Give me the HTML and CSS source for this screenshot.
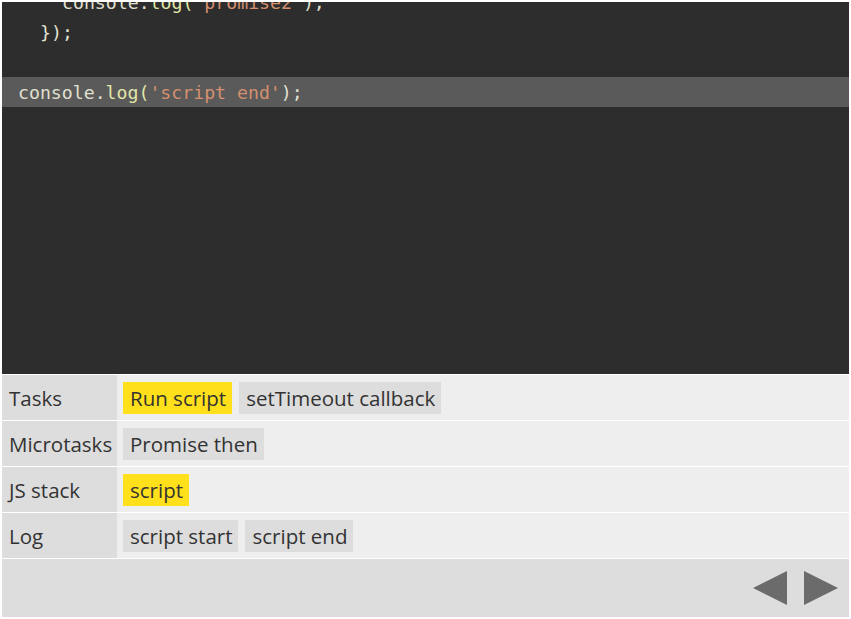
FILE: index.html
```html
<!DOCTYPE html>
<html>
<head>
<meta charset="utf-8">
<link rel="stylesheet" href="styles.css">
</head>
<body>
<div class="app">
  <div class="code">
    <div class="code-inner">
      <div class="line ind4"><span class="id">console</span><span class="pn">.</span><span class="fn">log(</span><span class="str">'promise2'</span><span class="pn">);</span></div>
      <div class="line ind2"><span class="pn">});</span></div>
      <div class="line">&nbsp;</div>
      <div class="line current"><span class="id">console</span><span class="pn">.</span><span class="fn">log(</span><span class="str">'script end'</span><span class="pn">);</span></div>
    </div>
  </div>
  <div class="row">
    <div class="label">Tasks</div>
    <div class="items"><span class="chip active">Run script</span><span class="chip">setTimeout callback</span></div>
  </div>
  <div class="row">
    <div class="label">Microtasks</div>
    <div class="items"><span class="chip">Promise then</span></div>
  </div>
  <div class="row">
    <div class="label">JS stack</div>
    <div class="items"><span class="chip active">script</span></div>
  </div>
  <div class="row">
    <div class="label">Log</div>
    <div class="items"><span class="chip">script start</span><span class="chip">script end</span></div>
  </div>
  <div class="controls">
    <button class="nav" aria-label="Previous"><svg width="34" height="34" viewBox="0 0 34 34"><polygon points="34,0 34,34 0,17" fill="#6b6b6b"/></svg></button>
    <button class="nav" aria-label="Next"><svg width="34" height="34" viewBox="0 0 34 34"><polygon points="0,0 0,34 34,17" fill="#6b6b6b"/></svg></button>
  </div>
</div>
</body>
</html>
```

FILE: styles.css
```css
html, body {
  margin: 0;
  padding: 0;
  background: #ffffff;
}
body {
  padding: 2px;
}
.app {
  width: 847px;
  height: 615px;
  display: flex;
  flex-direction: column;
  font-family: "Open Sans", "Noto Sans", sans-serif;
  color: #333333;
}
.code {
  height: 372px;
  background: #2d2d2d;
  overflow: hidden;
  flex: none;
}
.code-inner {
  margin-top: -15px;
  font-family: "DejaVu Sans Mono", monospace;
  font-size: 18.2px;
  color: #e0e0d0;
}
.line {
  height: 30px;
  line-height: 31px;
  padding-left: 16px;
  white-space: pre;
}
.line.ind2 { padding-left: 38px; }
.line.ind4 { padding-left: 60px; }
.line.current { background: #5a5a5a; }
.id { color: #e0e0d0; }
.pn { color: #e0e0d0; }
.fn { color: #e1e6a8; }
.str { color: #d4906f; }

.row {
  display: flex;
  height: 45px;
  margin-top: 1px;
  flex: none;
}
.label {
  width: 108px;
  background: #dddddd;
  font-size: 20.5px;
  line-height: 46px;
  padding-left: 7px;
  white-space: nowrap;
}
.items {
  flex: 1;
  background: #eeeeee;
  display: flex;
  align-items: flex-start;
  gap: 7px;
  padding: 7px 6px;
}
.chip {
  background: #dddddd;
  font-size: 20.5px;
  line-height: 33px;
  height: 32px;
  padding: 0 6px 0 7px;
  white-space: nowrap;
}
.chip.active {
  background: #ffe01b;
}
.controls {
  flex: 1;
  margin-top: 1px;
  background: #dddddd;
  display: flex;
  justify-content: flex-end;
  align-items: center;
  gap: 17px;
  padding-right: 11px;
}
.nav {
  border: 0;
  padding: 0;
  margin: 0;
  background: transparent;
  width: 34px;
  height: 34px;
  display: block;
}
.nav svg { display: block; }
```
